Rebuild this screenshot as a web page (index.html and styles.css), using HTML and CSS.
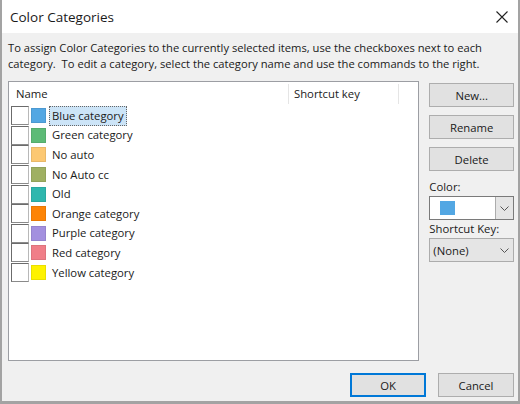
FILE: index.html
```html
<!DOCTYPE html>
<html lang="en">
<head>
    <meta charset="UTF-8">
    <title>Color Categories</title>
    <link rel="stylesheet" href="styles.css">
</head>
<body>
    <div class="dialog">
        <div class="titlebar">
            <span class="title">Color Categories</span>
            <svg class="close" width="12" height="12" viewBox="0 0 12 12">
                <path d="M0.5 0.5 L11.5 11.5 M11.5 0.5 L0.5 11.5" stroke="#222" stroke-width="1.1" fill="none"/>
            </svg>
        </div>
        <div class="content">
            <p class="intro">To assign Color Categories to the currently selected items, use the checkboxes next to each category.&nbsp; To edit a category, select the category name and use the commands to the right.</p>
            <div class="main">
                <div class="list">
                    <div class="list-head">
                        <span class="col-name">Name</span>
                        <span class="col-key">Shortcut key</span>
                        <span class="col-rest"></span>
                    </div>
                    <div class="row"><span class="check"></span><span class="swatch" style="background:#53a7e3"></span><span class="label selected">Blue category</span></div>
                    <div class="row"><span class="check"></span><span class="swatch" style="background:#5dbb77"></span><span class="label">Green category</span></div>
                    <div class="row"><span class="check"></span><span class="swatch" style="background:#fcc872"></span><span class="label">No auto</span></div>
                    <div class="row"><span class="check"></span><span class="swatch" style="background:#9fb062"></span><span class="label">No Auto cc</span></div>
                    <div class="row"><span class="check"></span><span class="swatch" style="background:#2fb7ae"></span><span class="label">Old</span></div>
                    <div class="row"><span class="check"></span><span class="swatch" style="background:#fd8406"></span><span class="label">Orange category</span></div>
                    <div class="row"><span class="check"></span><span class="swatch" style="background:#a390df"></span><span class="label">Purple category</span></div>
                    <div class="row"><span class="check"></span><span class="swatch" style="background:#f07e88"></span><span class="label">Red category</span></div>
                    <div class="row"><span class="check"></span><span class="swatch" style="background:#fef200"></span><span class="label">Yellow category</span></div>
                </div>
                <div class="side">
                    <button class="btn">New...</button>
                    <button class="btn">Rename</button>
                    <button class="btn">Delete</button>
                    <div class="field-label">Color:</div>
                    <div class="combo white">
                        <span class="combo-swatch"></span>
                        <span class="combo-arrow boxed">
                            <svg width="9" height="5" viewBox="0 0 9 5"><path d="M0.5 0.5 L4.5 4.5 L8.5 0.5" stroke="#555" fill="none"/></svg>
                        </span>
                    </div>
                    <div class="field-label">Shortcut Key:</div>
                    <div class="combo grey">
                        <span class="combo-text">(None)</span>
                        <span class="combo-arrow">
                            <svg width="9" height="5" viewBox="0 0 9 5"><path d="M0.5 0.5 L4.5 4.5 L8.5 0.5" stroke="#555" fill="none"/></svg>
                        </span>
                    </div>
                </div>
            </div>
            <div class="footer">
                <button class="btn btn-default">OK</button>
                <button class="btn">Cancel</button>
            </div>
        </div>
    </div>
</body>
</html>
```

FILE: styles.css
```css
* {
    box-sizing: border-box;
}

body {
    margin: 0;
    font-family: 'Open Sans', 'Noto Sans', sans-serif;
    background-color: #a0a0a0;
}

.dialog {
    width: 520px;
    height: 404px;
    border-left: 2px solid #a3a3a3;
    border-right: 2px solid #a3a3a3;
    border-bottom: 3px solid #a3a3a3;
    background-color: #f0f0f0;
    display: flex;
    flex-direction: column;
}

.titlebar {
    height: 33px;
    background-color: #fff;
    display: flex;
    align-items: center;
    justify-content: space-between;
    padding: 0 10px 0 8px;
}

.title {
    font-size: 13.5px;
    color: #1a1a1a;
}

.close {
    margin-top: 1px;
}

.content {
    flex: 1;
    padding: 7px 4px 0 6px;
    display: flex;
    flex-direction: column;
}

.intro {
    margin: 0;
    font-size: 11.2px;
    line-height: 16px;
    color: #1a1a1a;
}

.main {
    display: flex;
    margin-top: 9px;
    gap: 10px;
}

.list {
    width: 413px;
    height: 280px;
    background-color: #fff;
    border: 1px solid #9c9ea3;
}

.list-head {
    display: flex;
    height: 24px;
    align-items: center;
    font-size: 11.3px;
    color: #1a1a1a;
}

.col-name {
    width: 280px;
    padding-left: 7px;
    border-right: 1px solid #e5e5e5;
    height: 20px;
    line-height: 20px;
}

.col-key {
    width: 110px;
    padding-left: 5px;
    border-right: 1px solid #e5e5e5;
    height: 20px;
    line-height: 20px;
}

.row {
    display: flex;
    align-items: center;
    height: 19.6px;
    padding-left: 2px;
}

.check {
    width: 18px;
    height: 19px;
    border: 1px solid #6b6b6b;
    border-right-color: #b8b8b8;
    border-bottom-color: #8a8a8a;
    background-color: #fff;
}

.swatch {
    width: 15px;
    height: 15px;
    margin-left: 2px;
    border: 1px solid rgba(0, 0, 0, 0.08);
}

.label {
    margin-left: 3px;
    padding: 0 2px;
    font-size: 11.3px;
    line-height: 18px;
    color: #1a1a1a;
    border: 1px dotted transparent;
}

.label.selected {
    background-color: #cce4f7;
    border-color: #666;
}

.side {
    width: 85px;
    display: flex;
    flex-direction: column;
    padding-top: 2px;
}

.btn {
    font-family: inherit;
    font-size: 11.3px;
    color: #1a1a1a;
    height: 24px;
    background-color: #e1e1e1;
    border: 1px solid #adadad;
    padding: 0;
    margin-bottom: 8px;
}

.field-label {
    font-size: 11.3px;
    color: #1a1a1a;
    margin-top: 0;
    margin-bottom: 2px;
}

.combo {
    height: 24px;
    display: flex;
    align-items: center;
    justify-content: space-between;
    border: 1px solid #adadad;
    margin-bottom: 1px;
    font-size: 11.3px;
    color: #1a1a1a;
}

.combo.white {
    background-color: #fff;
    border-color: #7a7a7a;
    padding-left: 10px;
}

.combo.grey {
    background-color: #e5e5e5;
    border-color: #acacac;
    padding-left: 3px;
}

.combo-swatch {
    width: 15px;
    height: 14px;
    background-color: #53a7e3;
}

.combo-arrow {
    width: 18px;
    height: 22px;
    display: flex;
    align-items: center;
    justify-content: center;
}

.combo-arrow.boxed {
    background-color: #e5e5e5;
    border-left: 1px solid #acacac;
}

.footer {
    display: flex;
    justify-content: flex-end;
    gap: 12px;
    margin-top: auto;
    margin-bottom: 4px;
}

.footer .btn {
    width: 76px;
    margin-bottom: 0;
}

.btn-default {
    border: 2px solid #0078d7;
}
```
